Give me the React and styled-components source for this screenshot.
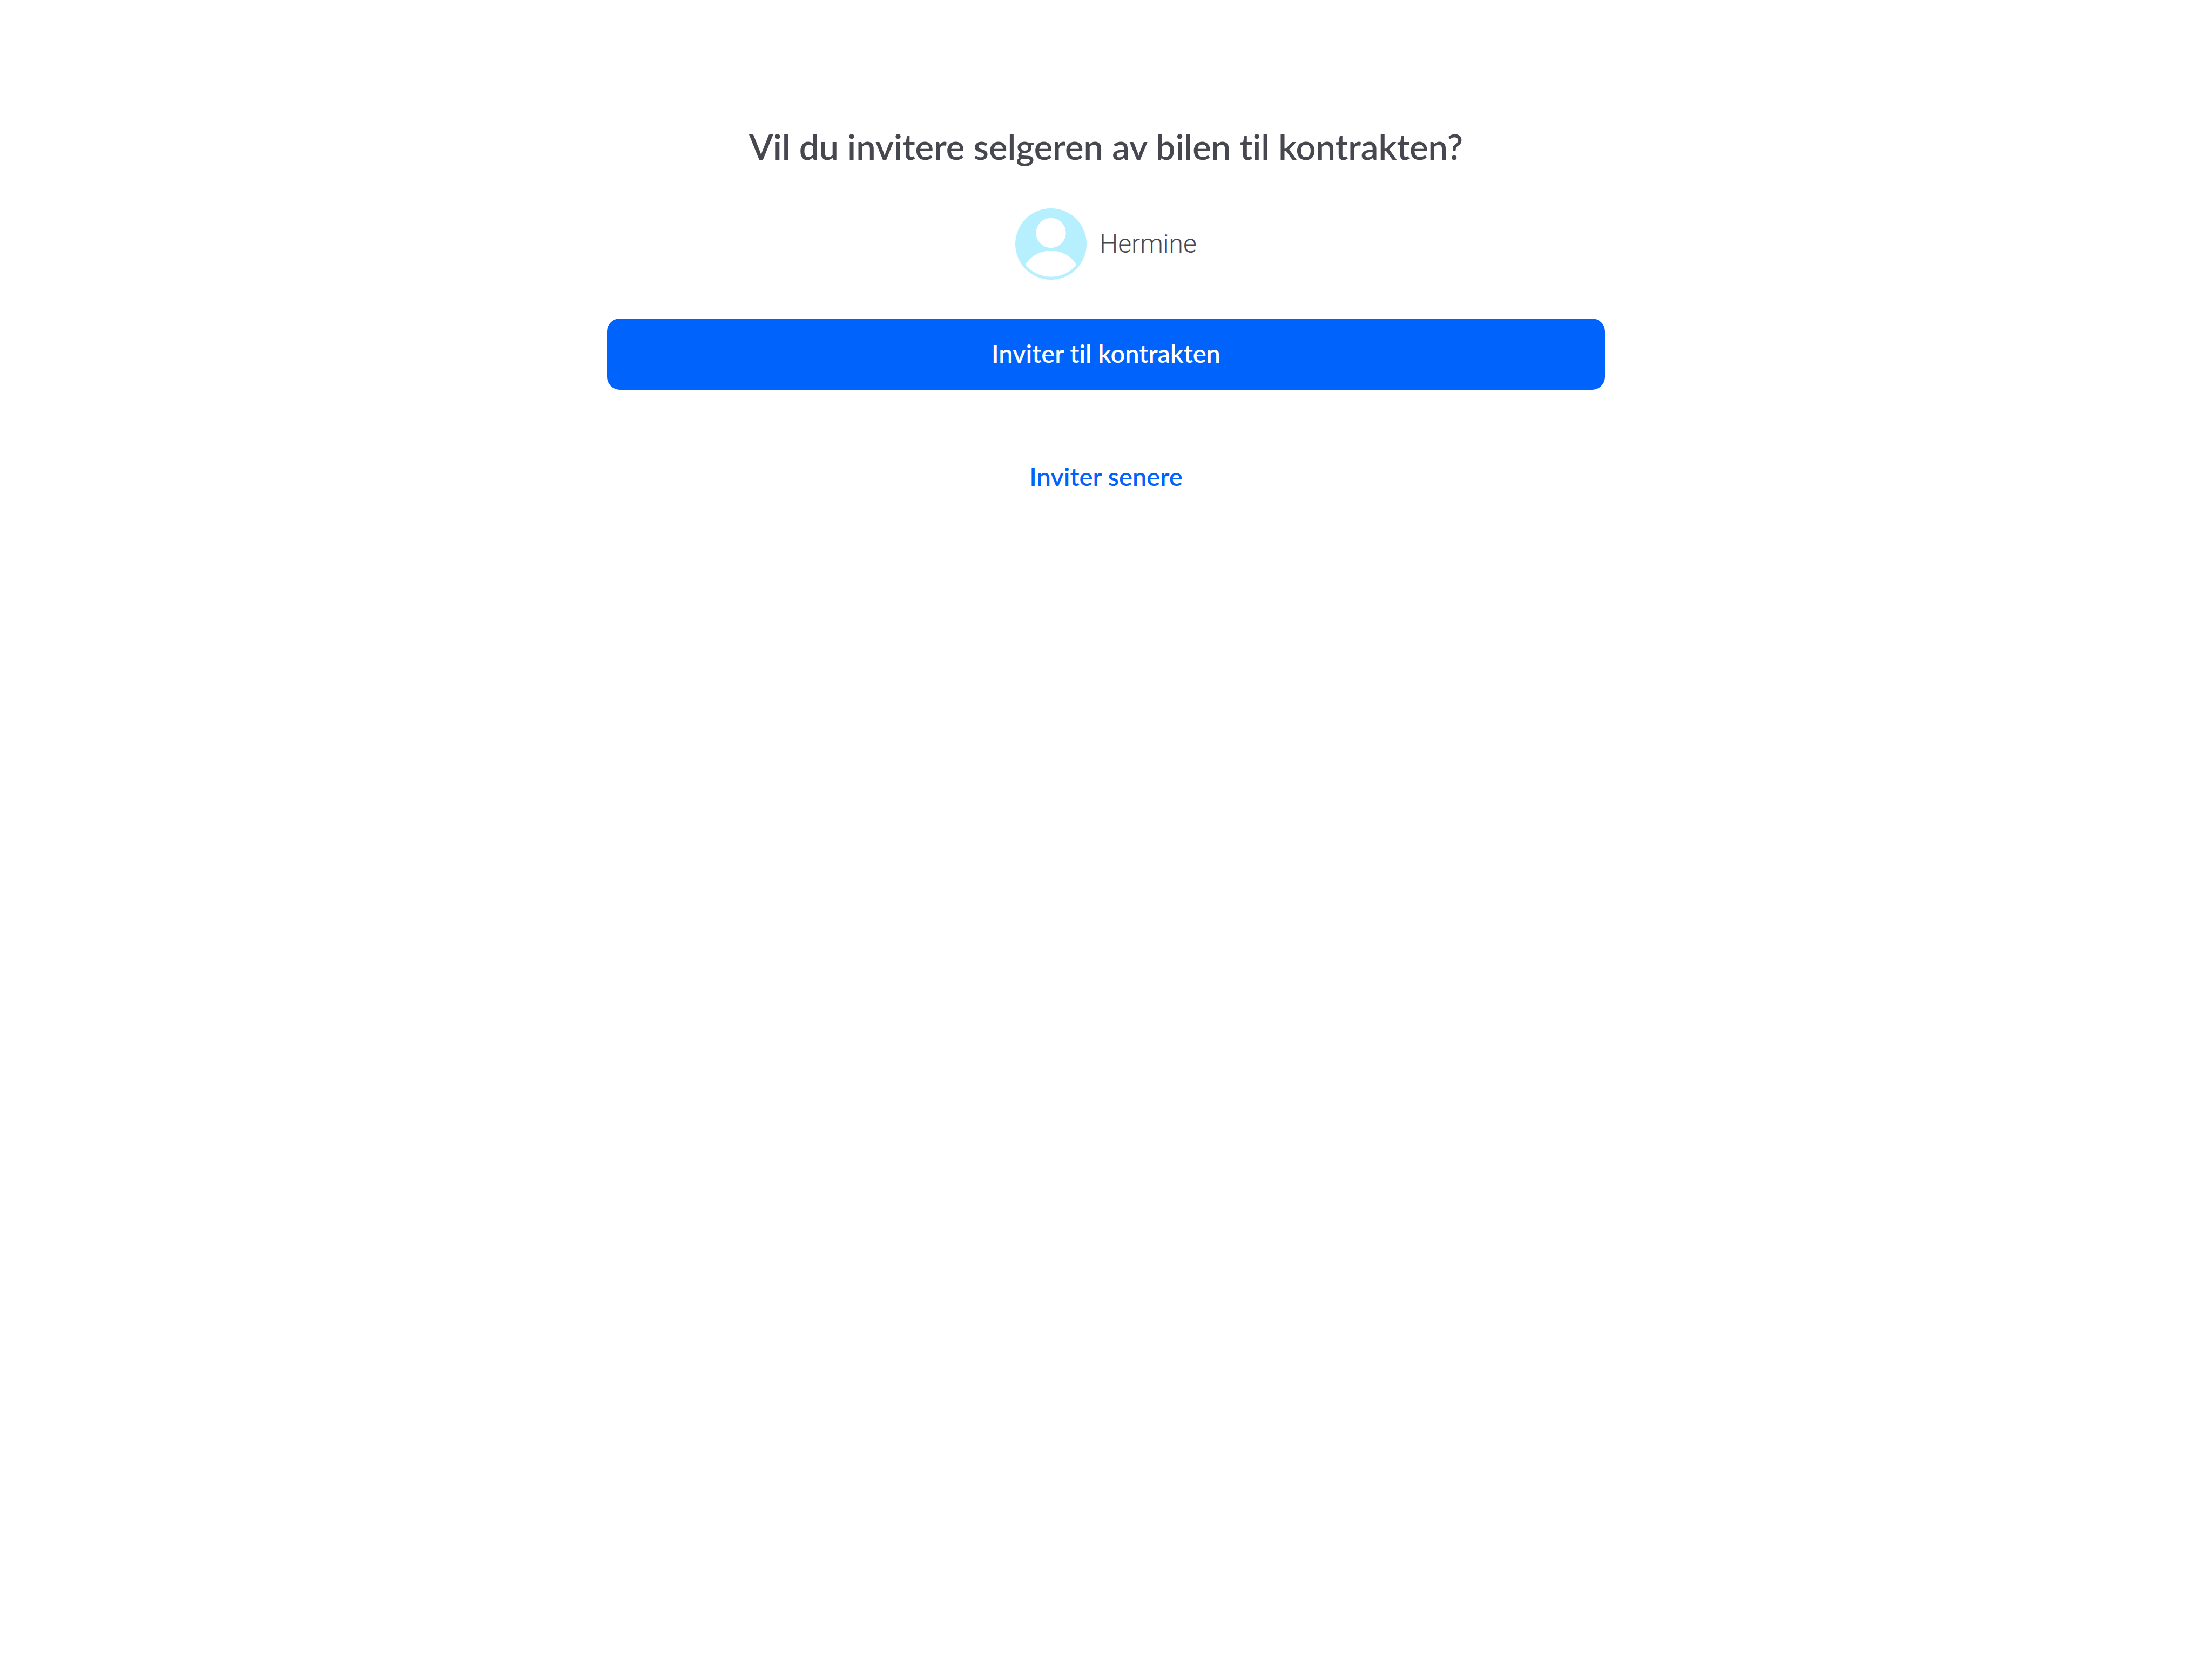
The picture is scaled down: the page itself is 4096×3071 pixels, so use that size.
import React from "react";
import styled, { createGlobalStyle } from "styled-components";

const GlobalStyle = createGlobalStyle`
  * {
    box-sizing: border-box;
  }

  body {
    margin: 0;
    background: #ffffff;
    color: #474750;
    font-family: Lato, "Noto Sans", sans-serif;
    font-variant-ligatures: none;
  }
`;

const Page = styled.main`
  display: flex;
  flex-direction: column;
  align-items: center;
  padding: 228px 48px 96px;
`;

const Content = styled.section`
  display: flex;
  flex-direction: column;
  align-items: center;
  gap: 72px;
  width: 100%;
  max-width: 1848px;
`;

const Title = styled.h1`
  margin: 0;
  font-size: 65px;
  font-weight: 600;
  line-height: 86px;
  text-align: center;
`;

const Person = styled.div`
  display: flex;
  align-items: center;
  gap: 24px;
`;

const Avatar = styled.svg`
  display: block;
  flex: none;
  width: 132px;
  height: 132px;
`;

const Name = styled.span`
  font-family: Roboto, "Noto Sans", sans-serif;
  font-size: 48px;
  font-weight: 300;
  line-height: 60px;
`;

const Actions = styled.div`
  display: flex;
  flex-direction: column;
  gap: 96px;
  width: 100%;
`;

const Button = styled.button`
  width: 100%;
  padding: 34px 48px 38px;
  border: 0;
  border-radius: 24px;
  background: ${({ $primary }) => ($primary ? "#0063fb" : "transparent")};
  color: ${({ $primary }) => ($primary ? "#ffffff" : "#0063fb")};
  font: inherit;
  font-size: 47px;
  font-weight: 600;
  line-height: 60px;
  font-variant-ligatures: none;
  text-align: center;
  cursor: pointer;
`;

function ProfileAvatar() {
  return (
    <Avatar viewBox="0 0 132 132" aria-hidden="true">
      <circle cx="66" cy="66" r="66" fill="#b6f0ff" />
      <circle cx="66" cy="45.5" r="27.7" fill="#ffffff" />
      <path
        d="M18.7 104.2A56 56 0 0 1 113.3 104.2A61 61 0 0 1 18.7 104.2Z"
        fill="#ffffff"
      />
    </Avatar>
  );
}

export default function App() {
  return (
    <>
      <GlobalStyle />
      <Page>
        <Content>
          <Title>Vil du invitere selgeren av bilen til kontrakten?</Title>
          <Person>
            <ProfileAvatar />
            <Name>Hermine</Name>
          </Person>
          <Actions>
            <Button type="button" $primary>
              Inviter til kontrakten
            </Button>
            <Button type="button">Inviter senere</Button>
          </Actions>
        </Content>
      </Page>
    </>
  );
}
